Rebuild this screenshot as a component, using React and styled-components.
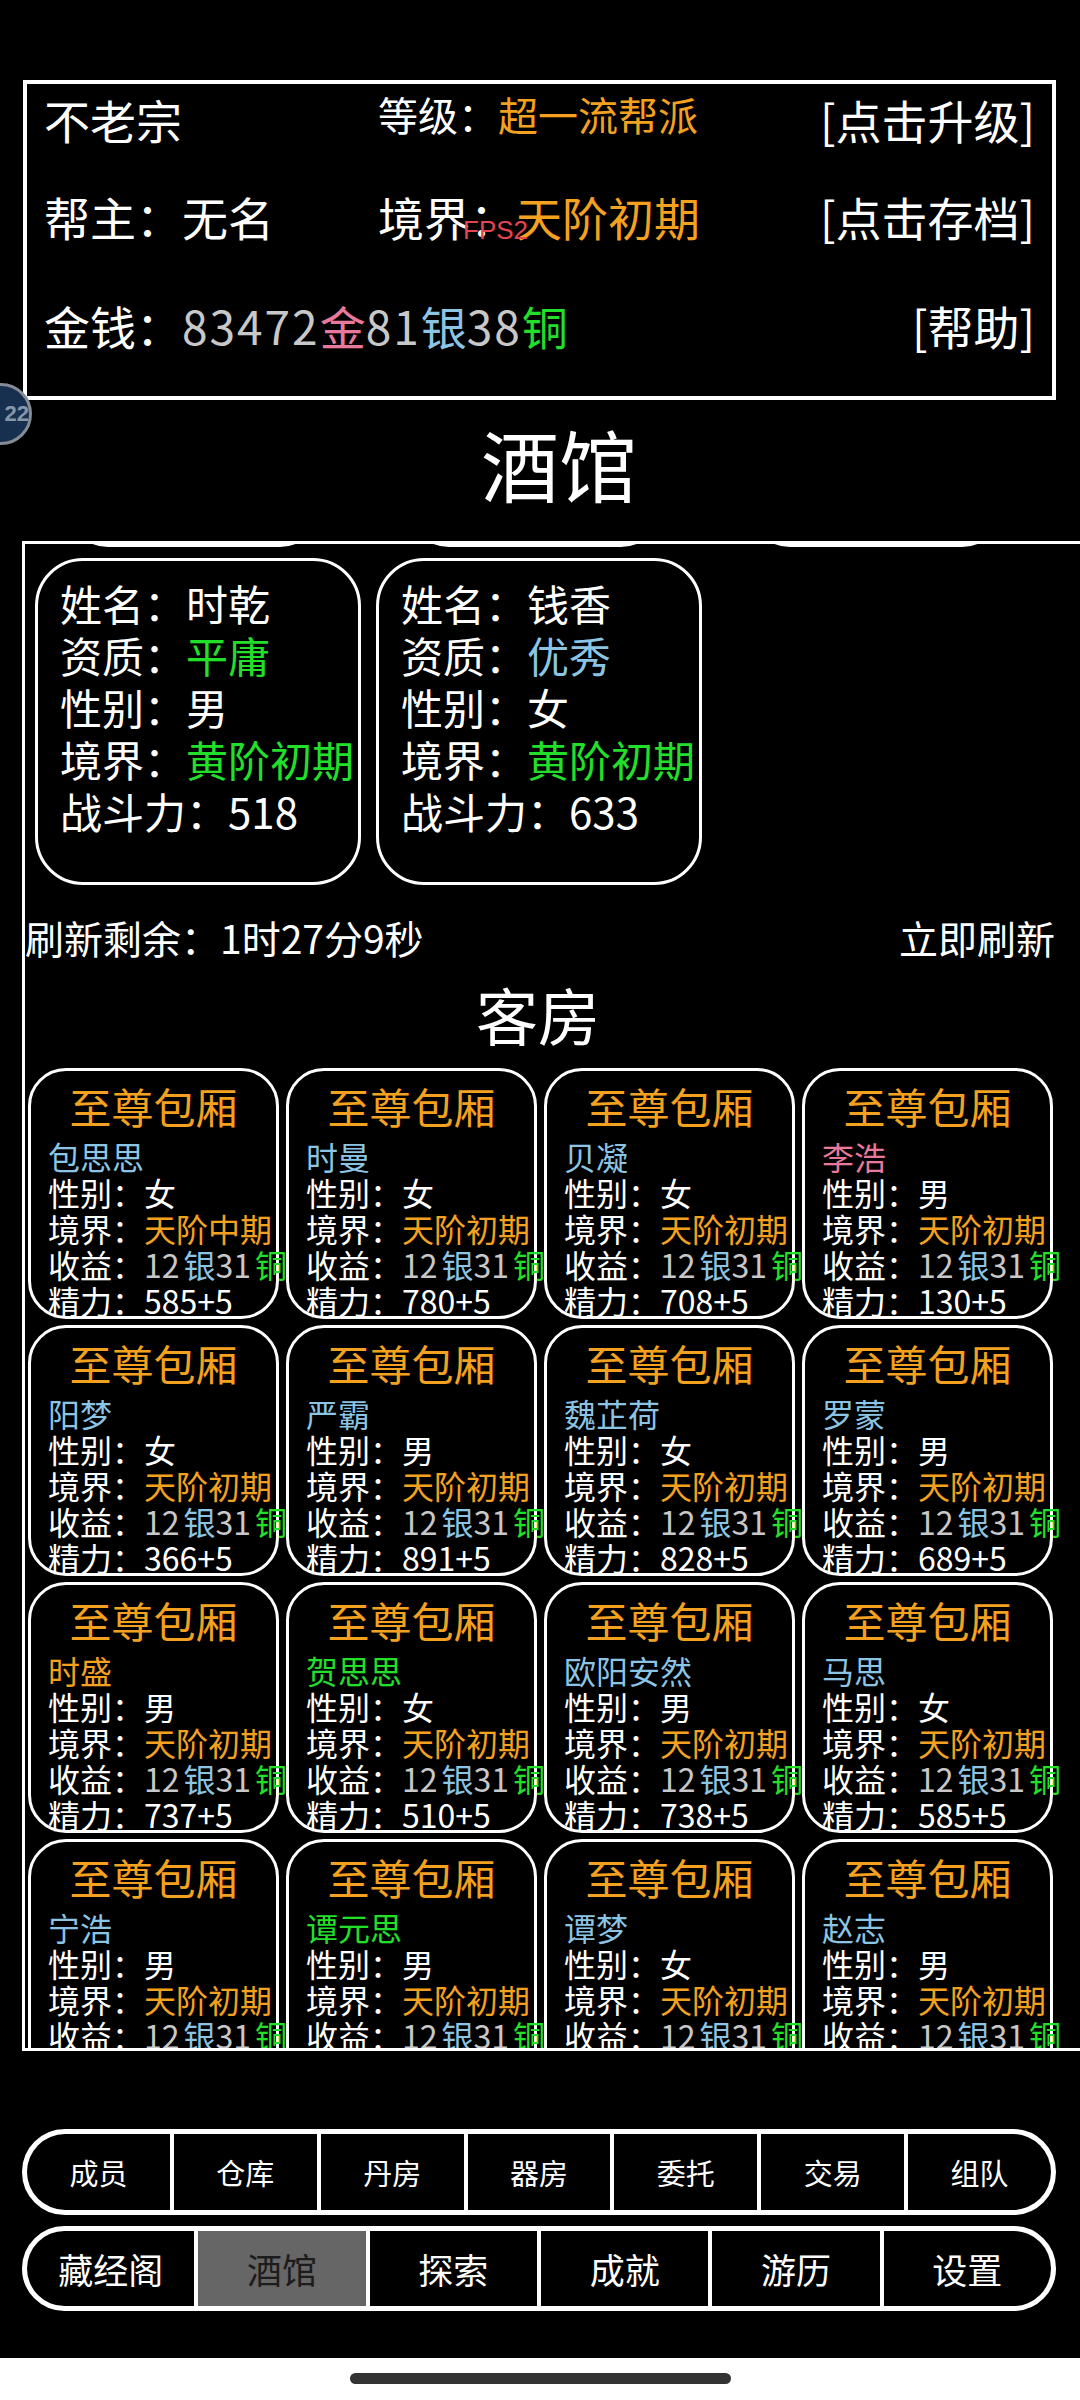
import React from 'react';
import styled, { createGlobalStyle } from 'styled-components';

const ORANGE = '#f4a11f';
const GREEN = '#22e02a';
const BLUE = '#8cc4e4';
const PINK = '#e8789c';
const GRAY = '#c8c8c8';

const GlobalStyle = createGlobalStyle`
    html, body {
        margin: 0;
        padding: 0;
        background: #000;
    }
    body {
        font-family: "Noto Sans CJK SC", "Noto Sans", sans-serif;
        color: #fff;
    }
`

const Page = styled.div`
    position: relative;
    width: 1080px;
    height: 2400px;
    overflow: hidden;
    background: #000;
    display: flex;
    flex-direction: column;
`

const StatusArea = styled.div`
    height: 80px;
    flex-shrink: 0;
`

const InfoPanel = styled.section`
    position: relative;
    box-sizing: border-box;
    margin-left: 23px;
    width: 1033px;
    height: 320px;
    border: 4px solid #fff;
    padding: 0 17px;
    flex-shrink: 0;
`

const InfoRow = styled.div`
    display: grid;
    grid-template-columns: 334px 1fr auto;
    align-items: center;
    height: ${p => p.$h}px;
    font-size: 46px;
    line-height: 60px;
    white-space: nowrap;
`

const Mid = styled.div`
    font-size: ${p => p.$size || 46}px;
    margin-bottom: ${p => p.$lift || 0}px;
`

const Tint = styled.span`
    color: ${p => p.$c};
`

const Coins = styled.span`
    color: ${GRAY};
    letter-spacing: ${p => p.$spread || 0}px;
    margin-right: ${p => p.$gap || 0}px;
`

const Fps = styled.span`
    position: absolute;
    left: 436px;
    top: 133px;
    font-family: "Liberation Sans", sans-serif;
    font-size: 26px;
    line-height: 26px;
    color: #e2464e;
`

const Badge = styled.div`
    position: absolute;
    left: -30px;
    top: 383px;
    width: 56px;
    height: 56px;
    border-radius: 50%;
    border: 3px solid #868c94;
    background: #17304f;
    color: #8797aa;
    font-family: "Liberation Sans", sans-serif;
    font-weight: bold;
    font-size: 22px;
    display: flex;
    align-items: center;
    justify-content: flex-end;
    padding-right: 0;
`

const PageTitle = styled.h1`
    margin: 13px 0 28px;
    padding-left: 38px;
    height: 100px;
    font-size: 78px;
    line-height: 100px;
    font-weight: normal;
    text-align: center;
    flex-shrink: 0;
`

const MainPanel = styled.section`
    box-sizing: border-box;
    margin-left: 22px;
    height: 1510px;
    border: 3px solid #fff;
    border-right: none;
    overflow: hidden;
    flex-shrink: 0;
`

const CutRow = styled.div`
    display: flex;
    gap: 89px;
    height: 3px;
    padding-left: 43px;
`

const CutCard = styled.div`
    box-sizing: border-box;
    width: 252px;
    height: 50px;
    margin-top: -47px;
    border: 3px solid #fff;
    border-radius: 0 0 40px 40px;
    flex-shrink: 0;
`

const RecruitRow = styled.div`
    display: flex;
    gap: 15px;
    margin-top: 11px;
    padding-left: 10px;
`

const RecruitCard = styled.div`
    box-sizing: border-box;
    width: 326px;
    height: 327px;
    border: 3px solid #fff;
    border-radius: 48px;
    padding: 16px 0 0 22px;
    font-size: 42px;
    line-height: 52px;
    white-space: nowrap;
`

const RefreshRow = styled.div`
    display: flex;
    justify-content: space-between;
    margin-top: 27px;
    padding-right: 25px;
    font-size: 39px;
    line-height: 50px;
`

const SectionTitle = styled.h2`
    margin: 12px 0 0;
    padding-right: 29px;
    font-size: 62px;
    line-height: 80px;
    font-weight: normal;
    text-align: center;
`

const RoomGrid = styled.div`
    display: grid;
    grid-template-columns: repeat(4, 251px);
    grid-auto-rows: 251px;
    column-gap: 7px;
    row-gap: 6px;
    margin-top: 14px;
    padding-left: 3px;
`

const RoomCard = styled.div`
    box-sizing: border-box;
    border: 3px solid #fff;
    border-radius: 38px;
    padding-top: 7px;
`

const RoomTitle = styled.div`
    color: ${ORANGE};
    font-size: 42px;
    line-height: 56px;
    text-align: center;
`

const RoomBody = styled.div`
    margin-top: 4px;
    padding-left: 17px;
    font-size: 32px;
    line-height: 36px;
    white-space: nowrap;
`

const NavPill = styled.nav`
    box-sizing: border-box;
    display: flex;
    gap: 4px;
    margin: ${p => p.$top}px 0 0 22px;
    width: 1034px;
    height: ${p => p.$h}px;
    border: 5px solid #fff;
    border-radius: 999px;
    background: #fff;
    overflow: hidden;
    flex-shrink: 0;
`

const NavCell = styled.div`
    flex: 1;
    display: flex;
    align-items: center;
    justify-content: center;
    background: ${p => (p.$active ? '#666' : '#000')};
    color: ${p => (p.$active ? '#1c1c1c' : '#fff')};
    font-size: ${p => p.$size}px;
`

const Spacer = styled.div`
    flex: 1;
`

const SystemBar = styled.div`
    height: 42px;
    background: #fff;
    display: flex;
    justify-content: center;
    padding-top: 15px;
    box-sizing: border-box;
    flex-shrink: 0;

    span {
        width: 381px;
        height: 11px;
        border-radius: 6px;
        background: #333;
    }
`

const recruits = [
    { name: '时乾', quality: '平庸', qColor: GREEN, gender: '男', realm: '黄阶初期', power: 518 },
    { name: '钱香', quality: '优秀', qColor: BLUE, gender: '女', realm: '黄阶初期', power: 633 },
];

const guests = [
    ['包思思', BLUE, '女', '天阶中期', '585+5'],
    ['时曼', BLUE, '女', '天阶初期', '780+5'],
    ['贝凝', BLUE, '女', '天阶初期', '708+5'],
    ['李浩', PINK, '男', '天阶初期', '130+5'],
    ['阳梦', BLUE, '女', '天阶初期', '366+5'],
    ['严霸', BLUE, '男', '天阶初期', '891+5'],
    ['魏芷荷', BLUE, '女', '天阶初期', '828+5'],
    ['罗蒙', BLUE, '男', '天阶初期', '689+5'],
    ['时盛', ORANGE, '男', '天阶初期', '737+5'],
    ['贺思思', GREEN, '女', '天阶初期', '510+5'],
    ['欧阳安然', BLUE, '男', '天阶初期', '738+5'],
    ['马思', BLUE, '女', '天阶初期', '585+5'],
    ['宁浩', BLUE, '男', '天阶初期', '402+5'],
    ['谭元思', GREEN, '男', '天阶初期', '655+5'],
    ['谭梦', BLUE, '女', '天阶初期', '719+5'],
    ['赵志', BLUE, '男', '天阶初期', '560+5'],
];

const navTop = ['成员', '仓库', '丹房', '器房', '委托', '交易', '组队'];
const navBottom = ['藏经阁', '酒馆', '探索', '成就', '游历', '设置'];

const App = () => {
    return (
        <Page>
            <GlobalStyle />
            <StatusArea />
            <InfoPanel>
                <InfoRow $h={67}>
                    <div>不老宗</div>
                    <Mid $size={40} $lift={10}>等级：<Tint $c={ORANGE}>超一流帮派</Tint></Mid>
                    <div>[点击升级]</div>
                </InfoRow>
                <InfoRow $h={129}>
                    <div>帮主：无名</div>
                    <Mid>境界：<Tint $c={ORANGE}>天阶初期</Tint></Mid>
                    <div>[点击存档]</div>
                </InfoRow>
                <InfoRow $h={89}>
                    <div>
                        金钱：<Coins $spread={2}>83472</Coins><Tint $c={PINK}>金</Tint>
                        <Coins $spread={2}>81</Coins><Tint $c={BLUE}>银</Tint>
                        <Coins $spread={2}>38</Coins><Tint $c={GREEN}>铜</Tint>
                    </div>
                    <div />
                    <div>[帮助]</div>
                </InfoRow>
                <Fps>FPS2</Fps>
            </InfoPanel>
            <Badge>22</Badge>

            <PageTitle>酒馆</PageTitle>

            <MainPanel>
                <CutRow>
                    <CutCard />
                    <CutCard />
                    <CutCard />
                </CutRow>
                <RecruitRow>
                    {recruits.map(r => (
                        <RecruitCard key={r.name}>
                            <div>姓名：{r.name}</div>
                            <div>资质：<Tint $c={r.qColor}>{r.quality}</Tint></div>
                            <div>性别：{r.gender}</div>
                            <div>境界：<Tint $c={GREEN}>{r.realm}</Tint></div>
                            <div>战斗力：{r.power}</div>
                        </RecruitCard>
                    ))}
                </RecruitRow>
                <RefreshRow>
                    <span>刷新剩余：1时27分9秒</span>
                    <span>立即刷新</span>
                </RefreshRow>
                <SectionTitle>客房</SectionTitle>
                <RoomGrid>
                    {guests.map(([name, color, gender, realm, energy]) => (
                        <RoomCard key={name}>
                            <RoomTitle>至尊包厢</RoomTitle>
                            <RoomBody>
                                <div><Tint $c={color}>{name}</Tint></div>
                                <div>性别：{gender}</div>
                                <div>境界：<Tint $c={ORANGE}>{realm}</Tint></div>
                                <div>
                                    收益：<Coins $gap={4}>12</Coins><Tint $c={BLUE}>银</Tint>
                                    <Coins $gap={4}>31</Coins><Tint $c={GREEN}>铜</Tint>
                                </div>
                                <div>精力：{energy}</div>
                            </RoomBody>
                        </RoomCard>
                    ))}
                </RoomGrid>
            </MainPanel>

            <NavPill $top={78} $h={86}>
                {navTop.map(t => (
                    <NavCell key={t} $size={29}>{t}</NavCell>
                ))}
            </NavPill>
            <NavPill $top={11} $h={85}>
                {navBottom.map(t => (
                    <NavCell key={t} $size={35} $active={t === '酒馆'}>{t}</NavCell>
                ))}
            </NavPill>
            <Spacer />
            <SystemBar>
                <span />
            </SystemBar>
        </Page>
    )
}

export default App;
